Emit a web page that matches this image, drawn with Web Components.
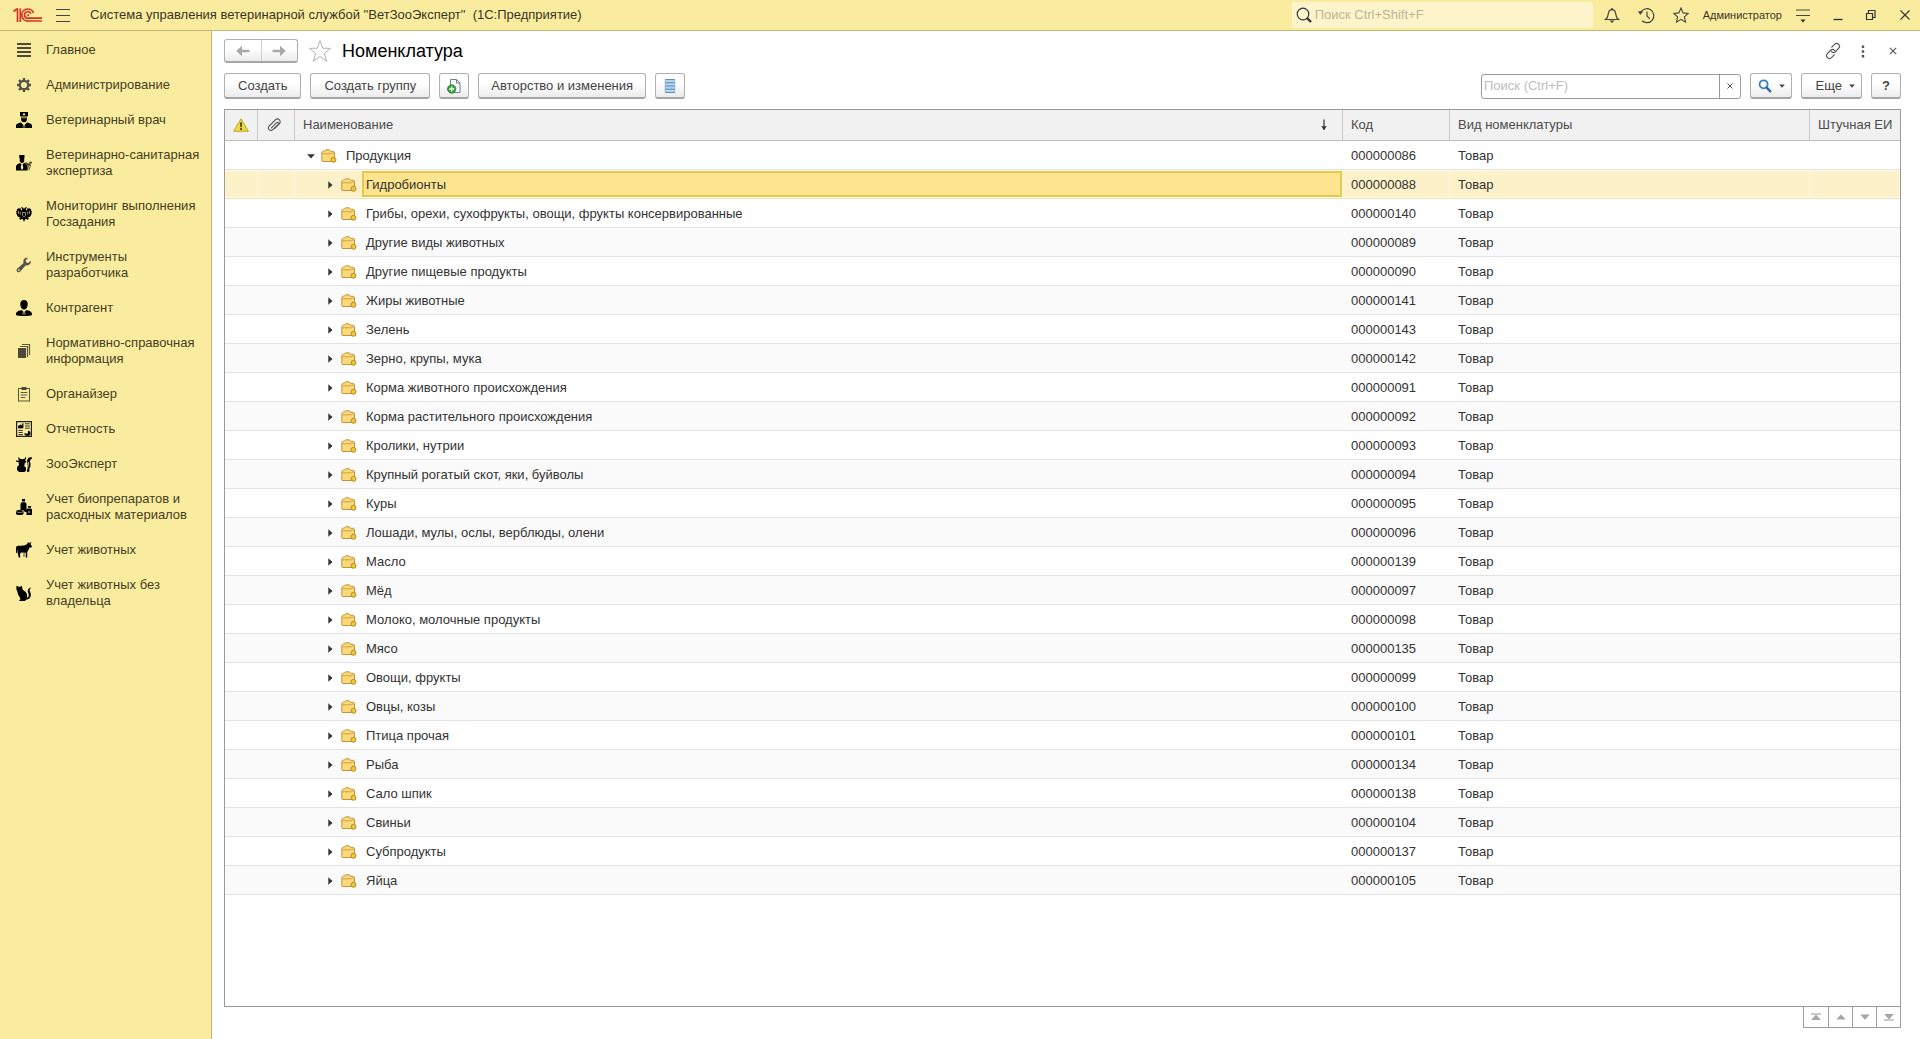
<!DOCTYPE html>
<html lang="ru">
<head>
<meta charset="utf-8">
<title>Номенклатура</title>
<style>
  html, body { margin: 0; height: 100%; }
  body {
    font: 13px/16px "Liberation Sans", Arial, sans-serif;
    color: #333;
    background: #fff;
    --accent: #faec9f;
    --accent-line: #c4b772;
    --frame: #9a9a9a;
  }
</style>
</head>
<body>
<vet-app></vet-app>
<script>
const ICONS = {
  logo: [30, 16, `<g fill="none" stroke="#d8321f" stroke-width="1.700"><path d="M.5 4.500 3.700 2H4.500V15M7.300 15V1.500"/><path d="M20.500 6A6 6 0 1 0 15.500 14H29"/><path d="M18 6.800A3.300 3.300 0 1 0 15.500 11.200H29"/><path d="M15.200 7.200v2"/></g>`],
  menu: [16, 16, `<path d="M1 2.500h14M1 8.500h14M1 14.500h14" stroke="#444" stroke-width="1.200"/>`],
  search: [18, 18, `<circle cx="8" cy="8" r="5.800" fill="none" stroke="#333" stroke-width="1.200"/><path d="m12 12 4 4" stroke="#333" stroke-width="2.400"/>`],
  bell: [16, 16, `<path d="M1.500 12.500c2.500-1.600 2.500-3.500 2.800-6C4.700 4 6 2.600 8 2.600S11.300 4 11.700 6.500c.3 2.500.3 4.400 2.800 6z" fill="none" stroke="#444" stroke-width="1.200"/><path d="M8 1v2" stroke="#444" stroke-width="1.500"/><path d="M5.500 13.500h5L8 16z" fill="#444"/>`],
  history: [17, 17, `<path d="M2.600 5.500A7 7 0 1 1 4 13.800" fill="none" stroke="#444" stroke-width="1.200"/><path d="M0 4.200h5.200L2.200 8z" fill="#444"/><path d="M9 4.500V9l2.800 2.800" fill="none" stroke="#444" stroke-width="1.200"/>`],
  star: [16, 16, `<path d="m8 1 2.100 4.900 5.200.5-3.900 3.500 1.100 5.200L8 12.400l-4.500 2.700 1.100-5.200L.7 6.400l5.200-.5z" fill="none" stroke="#444" stroke-width="1.100"/>`],
  bigstar: [24, 24, `<path d="m12 1.500 2.700 7.700 8 .2-6.400 4.900 2.400 7.900-6.700-4.700-6.700 4.700 2.400-7.900L1.300 9.400l8-.2z" fill="#fff" stroke="#b4b4b4"/>`],
  options: [16, 16, `<path d="M1 3h14M1 8.500h14" stroke="#444" stroke-width="1.200"/><path d="M5.500 12.500h5L8 15.500z" fill="#333"/>`],
  minimize: [10, 12, `<path d="M.5 10.500h9" stroke="#333" stroke-width="1.300"/>`],
  restore: [12, 12, `<path d="M1.500 4.500h6v6h-6zM3.500 4V1.500h6.500v7H8" fill="none" stroke="#333" stroke-width="1.200"/>`],
  close: [12, 12, `<path d="m1.500 1.500 9 9m0-9-9 9" stroke="#333" stroke-width="1.100"/>`],
  smallclose: [8, 8, `<path d="m.8.8 6.400 6.400m0-6.400L.8 7.200" stroke="#555" stroke-width="1.100"/>`],
  tinyclose: [6, 6, `<path d="m.5.500 5 5m0-5-5 5" stroke="#555"/>`],
  dots: [4, 13, `<path d="M.8.500h2.400v2.600H.8zM.8 5.200h2.400v2.600H.8zM.8 9.900h2.400v2.600H.8z" fill="#555"/>`],
  link: [18, 18, `<g fill="none" stroke="#555" stroke-width="1.200" stroke-linecap="round"><path d="m7.800 5.200 2.700-2.800c1.300-1.200 3-1.200 4.100-.1 1.200 1.200 1.200 2.900 0 4.100l-3.300 3.300c-1.200 1.100-2.700 1.100-3.800 0"/><path d="m10.200 12.800-2.700 2.800c-1.300 1.200-3 1.200-4.100.1-1.200-1.200-1.200-2.900 0-4.100l3.300-3.300c1.200-1.100 2.700-1.100 3.800 0"/></g>`],
  left: [16, 12, `<path d="M7 .8 1.200 6 7 11.200V7.300h7.500V4.700H7z" fill="#a9a9a9"/>`],
  right: [16, 12, `<path d="M9 .8 14.800 6 9 11.200V7.300H1.500V4.700H9z" fill="#a9a9a9"/>`],
  copy: [14, 16, `<path d="M3.500 1.500h6l3.500 3.600v9.400H3.500z" fill="#fff" stroke="#6b7e92"/><path d="M9.500 1.500v3.600H13" fill="none" stroke="#6b7e92"/><circle cx="4.700" cy="11" r="4.200" fill="#36a540" stroke="#1f7c2b" stroke-width=".8"/><path d="M4.700 8.600v4.800M2.300 11h4.800" stroke="#fff" stroke-width="1.300"/>`],
  list: [12, 16, `<path d="M1 1.500h10v13H1z" fill="#b3d2ec"/><path d="M1 1.500h10M1 4.700h10M1 8h10M1 11.200h10M1 14.500h10" stroke="#5f8fb8"/><path d="M1.200 1v14M10.800 1v14" stroke="#8fb2d0" stroke-width=".7"/>`],
  find: [14, 14, `<circle cx="5.600" cy="5.300" r="4" fill="none" stroke="#3580b8" stroke-width="1.800"/><path d="m8.500 8.300 3.800 4" stroke="#2f6f9f" stroke-width="2.400" stroke-linecap="round"/>`],
  caret: [6, 4, `<path d="M.2.500h5.600L3 3.800z" fill="#444"/>`],
  warn: [16, 14, `<path d="M8 .8 15.400 13.300H.6z" fill="#ecd93a" stroke="#b9a73c" stroke-linejoin="round"/><path d="M7 4.500h2l-.4 4.800H7.400zM7.100 10.200h1.800V12H7.100z" fill="#3a3a1c"/>`],
  clip: [14, 14, `<path d="m4 10.300 5.600-5.600c.5-.5 1.200-.5 1.600 0 .5.400.5 1.100 0 1.600l-5.300 5.300c-1.100 1.100-2.700 1.100-3.700.1s-1-2.600 0-3.700l5.900-5.900c1.300-1.300 3.200-1.400 4.300-.3s1 3-.3 4.300l-4.800 4.800" fill="none" stroke="#555" stroke-width="1.100"/>`],
  down: [8, 5, `<path d="M.2.300h7.600L4 4.500z" fill="#333"/>`],
  next: [5, 8, `<path d="M.3.200 4.500 4 .3 7.800z" fill="#333"/>`],
  folder: [16, 14, `<path d="M.8 12V3.300L2.500 2h1l1.200-1.200h3.500L9.500 2.300h3l1 1v9.200H1.300z" fill="#fcd978" stroke="#c0943a"/><path d="M1.300 4.800h9l1.200-.8h1.500" fill="none" stroke="#c79b40" stroke-width=".9"/><circle cx="12.500" cy="10.800" r="2.500" fill="#edc73a" stroke="#a98528" stroke-width=".9"/>`],
  sort: [8, 12, `<path d="M4 .5v10" stroke="#333" stroke-width="1.200"/><path d="M1.300 7.300h5.400L4 11.300z" fill="#333"/>`],
  first: [10, 8, `<path d="M0 1h10" stroke="#999"/><path d="m5 1.500 4.800 5.500H.2z" fill="#a5a5a5"/>`],
  prev: [10, 8, `<path d="m5 1.300 4.800 5.200H.2z" fill="#a5a5a5"/>`],
  following: [10, 8, `<path d="M5 6.700.2 1.500h9.600z" fill="#a5a5a5"/>`],
  last: [10, 8, `<path d="M0 7h10" stroke="#999"/><path d="M5 6.500.2 1h9.600z" fill="#a5a5a5"/>`],
  main: [16, 16, `<path d="M1 2h14M1 6h14M1 10h14M1 14h14" stroke="#4d4a3a" stroke-width="2"/>`],
  gear: [16, 16, `<circle cx="8" cy="8" r="4.200" fill="none" stroke="#55524a" stroke-width="2.200"/><path d="M8 1v2.500M8 12.500V15M1 8h2.500M12.500 8H15M3 3l1.800 1.800M11.200 11.200 13 13M13 3l-1.800 1.800M4.800 11.200 3 13" stroke="#55524a" stroke-width="2.400"/>`],
  vet: [16, 16, `<path d="M4 0h8v3.500l-.6 1H4.600L4 3.500z"/><path d="M5 5h6v1.700C11 9 9.700 10.300 8 10.300S5 9 5 6.700z"/><path d="M7.500 1h1v.8h.8v1h-.8v.8h-1v-.8h-.8v-1h.8zM5.200 5.600h5.600v.7H5.200z" fill="#faec9f"/><path d="M0 16v-2.500c.2-1.500 1.200-2 5-3l3 3 3-3c3.800 1 4.800 1.500 5 3V16z"/><path d="m6.300 10.800 1.300 1.500-.6 3.500M9.700 10.800l-1.300 1.500.6 3.500" stroke="#faec9f" stroke-width=".6" fill="none"/>`],
  vse: [16, 16, `<path d="M3.300 0h5.200v2.800l-.3.500v2.300C8.200 7 7.300 8 6 8S3.700 7 3.700 5.600V3.300l-.4-.5z"/><path d="M0 15.600v-4C.3 9.500 1.500 9 4 8l2 2 2-2c2 .6 3 1.200 3 3v4.600z"/><path d="M5.300 9.500h1.400l.6 3.500L6 15l-1.300-2z" fill="#faec9f"/><path d="M8.500 7.500h2.700l.5 1H13l.5-1.700H16v1.400h-1.300L14 10.500h-1l-1.300 4.700h-1.100l.9-4.700H10z" fill="#4a452a"/><path d="M14.800 9.500 14 12l-1.300 3.300" stroke="#4a452a" fill="none" stroke-width=".9"/>`],
  eagle: [16, 16, `<path d="M8 3.500C7.500 1.500 6.300.8 5 1.500l1 1.200v1.600C5.500 5 5 4 4.700 2.800L3.800 1.500 3.300 3 2.500 1.700 2 3.500 1 2.500 1 5 0 4.500l.7 2.800L0 7.200l1.500 2.500-.7.100 2.400 1.500h1.300L2.500 13l1.700-.2-.2 1.500 2-1.500 1 .7 1 2.500 1-2.500 1-.7 2 1.500-.2-1.500 1.700.2-2-1.700h1.300l2.400-1.500-.7-.1L16 7.200l-.7.100.7-2.800-1 .5V2.500l-1 1-.5-1.800-.8 1.300-.5-1.500-.9 1.300C11 4 10.500 5 10 4.300V2.700l1-1.200C9.700.8 8.500 1.500 8 3.500z"/><path d="M6.500 6.500h3v3L8 10.800 6.500 9.500zM4.300 5.500v3M11.700 5.500v3M2.500 5v3M13.500 5v3" fill="none" stroke="#faec9f" stroke-width=".6"/>`],
  wrench: [16, 16, `<path d="M14.800 3.800 12.300 6l-2.200-.5-.4-2.200L12 1C9.800.3 7.400 1.800 7.300 4.200c0 .6.100 1.200.3 1.700L1.400 11.600c-1 1-1 2.300-.2 3.100.9.900 2.300.8 3.100-.2l5.400-6.300c2.900 1 5.700-1.600 5.100-4.400z" fill="#55524a"/><circle cx="2.900" cy="13.100" r=".9" fill="#faec9f"/>`],
  person: [16, 16, `<path d="M4.300 4c0-2.400 1.500-4 3.700-4s3.700 1.600 3.700 4c0 3-1.500 5.500-3.700 5.500S4.300 7 4.300 4z"/><path d="M0 15c0-3 1.300-4 5.500-5L8 12l2.500-2c4.200 1 5.500 2 5.500 5-2 1.300-14 1.300-16 0z"/><path d="m6.500 10.800 1 1-.7 3M9.500 10.800l-1 1 .7 3" stroke="#faec9f" stroke-width=".7" fill="none"/>`],
  books: [16, 16, `<path d="M2 5h8v10H2z" fill="#4b4939"/><path d="M4 3.500h7.500V14M6 1.500h7.500V12" fill="none" stroke="#5d5943" stroke-width="1.200"/>`],
  clipboard: [16, 16, `<path d="M2.500 2.500h11v12.500h-11z" fill="none" stroke="#5d5943" stroke-width="1.100"/><path d="M5.500 1h5v3h-5z" fill="#4b4939"/><path d="M4.700 6.500h6.600M4.700 9h6.600M4.700 11.500h4.500" stroke="#5d5943" stroke-width="1.100"/>`],
  report: [16, 16, `<path d="M.6.600h14.800v14.800H.6z" fill="none" stroke="#222" stroke-width="1.200"/><path d="M2.500 7V5l2-1 1.200.7L7 2.500V7zM9 2.800h4.800M9 5h4.800M9 7.200h4.800M2.500 9.500h4.200M2.500 11.500h4.200M2.500 13.500h4.200" stroke="#222" stroke-width=".9"/><path d="M8 12.500h4V9.700c1.700 0 2.500 1.200 2.500 2.700 0 1.400-1 2.400-3 2.400-1.700 0-3-.6-3.500-2.300z"/>`],
  zoo: [16, 16, `<path d="M0 4.500 3 4.800 2.300 2.800 2.600.8l1.200 2 2.700.5L9 2.500 9.500.5l.7 2L9 4.500l1.500.8-1 1.500-.8.500-.4 3 1.700 1.500v2.700L8.500 16H3l-2-2v-3l2-2-.5-3L.3 6z"/><path d="m11 4.500 1.500-2.700L15.500 1l.5 1.500-1.500 1.200-.7 1.800.7 2-.2 3.500-1 1.200.2 3.300-2 .5-.7-1 .8-2.500z" /><path d="m11.800 5.500 1 1-.5 4.500-1 1z" fill="#faec9f"/>`],
  bottles: [16, 16, `<path d="M6 0h3v2.500H6zM5.500 3.200h4L10.500 5v8H9l-2-2H4.500V5zM12 7h3v1.800h-3zM11.300 9.500h4l.7 1.300V16h-5.500v-5z"/><path d="M0 12c1-1.500 6-1.500 7.500 0V15c-1.500 1.300-6.500 1.300-7.500 0z"/><path d="M.3 12.700c2 1 5 1 7 0" stroke="#faec9f" stroke-width=".6" fill="none"/><path d="M13 12v2m-1-1h2" stroke="#faec9f" stroke-width=".6"/>`],
  cow: [16, 16, `<path d="M.5 4.300C2 3.300 8 4.300 10.500 2.500l1.300-1.300L11.500 0l1.800 1L15.500 0 14.500 2l1.500 2.500-1 1.300-1.500-.3-1.300 3-1 1.500V15.500H9.800V10.800L5 10.500l-1 1.500.3 3.500H2.800L1.500 10.500 1.300 6.500.8 11H0V6z"/><path d="M8.500 10v5h-1v-4.500z" fill="#4a452a"/>`],
  cat: [16, 16, `<path d="m.5.800 2.200 1h1.500L5.800.8 6.500 4c0 1.300 3 2 4 4.300.7 1.500.7 3.200.5 4.700 1.500-.8 2-2 1.700-3.500-.3-1.700-1.300-2.700-.8-4.500C12.500 3.200 14 2 15.700 3c-.8 0-1.900.5-2.100 2-.2 1.400 1.400 2.600 1.300 5-.1 2.600-2 4.500-4.900 4.800L9 16H3.500l-.3-1 1.500-.8-2-3.700C1.500 9.500 2 7.200.8 5.500L.3 3.500z"/>`]
};

/* Base class: clones markup and styles into an open shadow root. */
class Part extends HTMLElement {
  connectedCallback() {
    if (this.shadowRoot) return;
    const tpl = document.createElement('template');
    tpl.innerHTML = `<style>*{box-sizing:border-box}button{font:inherit;color:inherit;border:0;padding:0;margin:0;background:none}${this.css()}</style>${this.html()}`;
    this.attachShadow({ mode: 'open' }).append(tpl.content.cloneNode(true));
  }
  css() { return ''; }
  html() { return '<slot></slot>'; }
}

customElements.define('vet-icon', class extends Part {
  css() { return ':host{display:inline-flex;flex:none;vertical-align:middle}svg{display:block}'; }
  html() {
    const [w, h, body] = ICONS[this.getAttribute('name')];
    return `<svg width="${w}" height="${h}" viewBox="0 0 ${w} ${h}" aria-hidden="true">${body}</svg>`;
  }
});

customElements.define('vet-button', class extends Part {
  css() { return `
    :host{display:inline-flex}
    button{height:26px;min-width:30px;padding:1px var(--pad,6px) 0;display:flex;align-items:center;justify-content:var(--justify,center);gap:7px;
      border:1px solid #b0b0b0;border-bottom:2px solid #a4a4a4;border-radius:3px;background:linear-gradient(#fff 40%,#ececec);color:#444;white-space:nowrap;width:100%}`; }
  html() {
    const label = this.getAttribute('label');
    return `<button type="button"${label ? ` aria-label="${label}"` : ''}><slot></slot></button>`;
  }
});

customElements.define('vet-titlebar', class extends Part {
  css() { return `
    :host{display:flex;align-items:center;height:31px;background:var(--accent);border-bottom:1px solid var(--accent-line);padding:0 9px 0 13px;color:#3a3624}
    .menu{margin:0 19px 0 12px}
    .name{flex:1;white-space:pre}
    label{display:flex;align-items:center;gap:2px;width:301px;height:26px;padding-left:3px;background:#fdf4cb;border-radius:3px}
    input{flex:1;min-width:0;border:0;background:none;outline:0;font:inherit;padding:0}
    input::placeholder{color:#bcb694;opacity:1}
    .tools{display:flex;align-items:center;gap:18px;margin:0 14px 0 11px}
    .user{font-size:11px;white-space:nowrap}
    .win{display:flex;align-items:center;gap:22px;margin-left:13px}
    button{display:flex}`; }
  html() { return `
    <vet-icon name="logo"></vet-icon>
    <button class="menu" type="button" aria-label="Меню"><vet-icon name="menu"></vet-icon></button>
    <span class="name">Система управления ветеринарной службой "ВетЗооЭксперт"  (1С:Предприятие)</span>
    <label><vet-icon name="search"></vet-icon><input type="text" placeholder="Поиск Ctrl+Shift+F" aria-label="Поиск"></label>
    <div class="tools">
      <button type="button" aria-label="Уведомления"><vet-icon name="bell"></vet-icon></button>
      <button type="button" aria-label="История"><vet-icon name="history"></vet-icon></button>
      <button type="button" aria-label="Избранное"><vet-icon name="star"></vet-icon></button>
    </div>
    <button class="user" type="button">Администратор</button>
    <div class="win">
      <button type="button" aria-label="Настройки"><vet-icon name="options"></vet-icon></button>
      <button type="button" aria-label="Свернуть"><vet-icon name="minimize"></vet-icon></button>
      <button type="button" aria-label="Восстановить"><vet-icon name="restore"></vet-icon></button>
      <button type="button" aria-label="Закрыть"><vet-icon name="close"></vet-icon></button>
    </div>`; }
});

const SECTIONS = [
  ['main', 'Главное'], ['gear', 'Администрирование'], ['vet', 'Ветеринарный врач'],
  ['vse', 'Ветеринарно-санитарная экспертиза'], ['eagle', 'Мониторинг выполнения Госзадания'],
  ['wrench', 'Инструменты разработчика'], ['person', 'Контрагент'],
  ['books', 'Нормативно-справочная информация'], ['clipboard', 'Органайзер'], ['report', 'Отчетность'],
  ['zoo', 'ЗооЭксперт'], ['bottles', 'Учет биопрепаратов и расходных материалов'],
  ['cow', 'Учет животных'], ['cat', 'Учет животных без владельца']
];

customElements.define('vet-sidebar', class extends Part {
  css() { return `
    :host{display:block;width:212px;flex:none;background:var(--accent);border-right:1px solid var(--accent-line)}
    nav{display:flex;flex-direction:column;gap:19px;padding:11px 10px 0 16px}
    a{display:flex;align-items:center;gap:14px;color:#45401f;text-decoration:none}`; }
  html() { return `<nav aria-label="Разделы">${SECTIONS.map(([i, t]) => `<a href="#${i}"><vet-icon name="${i}"></vet-icon><span>${t}</span></a>`).join('')}</nav>`; }
});

customElements.define('vet-heading', class extends Part {
  css() { return `
    :host{display:flex;align-items:center;height:24px}
    .nav{display:flex;width:74px;height:24px;border:1px solid #b0b0b0;border-bottom:2px solid #a6a6a6;border-radius:3px;background:linear-gradient(#fff 40%,#ececec)}
    .nav button{flex:1;display:flex;align-items:center;justify-content:center}
    .nav button+button{border-left:1px solid #d0d0d0}
    .fav{display:flex;margin:0 10px}
    h1{flex:1;margin:0;font-size:18px;line-height:24px;font-weight:400;color:#000}
    .win{display:flex;align-items:center;gap:14px}
    .win button{display:flex;justify-content:center;width:16px}`; }
  html() { return `
    <div class="nav"><button type="button" aria-label="Назад"><vet-icon name="left"></vet-icon></button><button type="button" aria-label="Вперед"><vet-icon name="right"></vet-icon></button></div>
    <button class="fav" type="button" aria-label="В избранное"><vet-icon name="bigstar"></vet-icon></button>
    <h1><slot></slot></h1>
    <div class="win">
      <button type="button" aria-label="Ссылка"><vet-icon name="link"></vet-icon></button>
      <button type="button" aria-label="Действия"><vet-icon name="dots"></vet-icon></button>
      <button type="button" aria-label="Закрыть"><vet-icon name="smallclose"></vet-icon></button>
    </div>`; }
});

customElements.define('vet-toolbar', class extends Part {
  css() { return `
    :host{display:flex;align-items:center;gap:9px;margin:10px 0}
    .text{--pad:13px}
    .long{--pad:12px}
    .field{display:flex;width:260px;height:25px;margin-left:auto;border:1px solid var(--frame);border-radius:3px;background:#fff}
    input{flex:1;min-width:0;border:0;outline:0;background:none;padding:0 2px;font:inherit}
    input::placeholder{color:#bdbdbd;opacity:1}
    .field button{width:21px;border-left:1px solid var(--frame);display:flex;align-items:center;justify-content:center}
    .find{width:42px}
    .more{width:61px;--justify:flex-end}
    .help{width:30px;font-weight:700}`; }
  html() { return `
    <vet-button class="text">Создать</vet-button>
    <vet-button class="text">Создать группу</vet-button>
    <vet-button label="Скопировать"><vet-icon name="copy"></vet-icon></vet-button>
    <vet-button class="long">Авторство и изменения</vet-button>
    <vet-button label="Список"><vet-icon name="list"></vet-icon></vet-button>
    <div class="field"><input type="text" placeholder="Поиск (Ctrl+F)" aria-label="Поиск"><button type="button" aria-label="Очистить"><vet-icon name="tinyclose"></vet-icon></button></div>
    <vet-button class="find" label="Найти"><vet-icon name="find"></vet-icon><vet-icon name="caret"></vet-icon></vet-button>
    <vet-button class="more">Еще<vet-icon name="caret"></vet-icon></vet-button>
    <vet-button class="help">?</vet-button>`; }
});

const ROWS = [
  ['Продукция', '086'], ['Гидробионты', '088'], ['Грибы, орехи, сухофрукты, овощи, фрукты консервированные', '140'],
  ['Другие виды животных', '089'], ['Другие пищевые продукты', '090'], ['Жиры животные', '141'], ['Зелень', '143'],
  ['Зерно, крупы, мука', '142'], ['Корма животного происхождения', '091'], ['Корма растительного происхождения', '092'],
  ['Кролики, нутрии', '093'], ['Крупный рогатый скот, яки, буйволы', '094'], ['Куры', '095'],
  ['Лошади, мулы, ослы, верблюды, олени', '096'], ['Масло', '139'], ['Мёд', '097'], ['Молоко, молочные продукты', '098'],
  ['Мясо', '135'], ['Овощи, фрукты', '099'], ['Овцы, козы', '100'], ['Птица прочая', '101'], ['Рыба', '134'],
  ['Сало шпик', '138'], ['Свиньи', '104'], ['Субпродукты', '137'], ['Яйца', '105']
];

customElements.define('vet-grid', class extends Part {
  css() { return `
    :host{display:block;flex:1;min-height:0;overflow:hidden;border:1px solid var(--frame);background:#fff}
    table{width:100%;border-collapse:separate;border-spacing:0;table-layout:fixed}
    .flag{width:33px}.clip{width:37px}.code{width:107px}.kind{width:360px}.unit{width:90px}
    th,td{padding:0 0 0 8px;text-align:left;font-weight:400;white-space:nowrap;overflow:hidden}
    th{height:31px;background:#f1f1f1;border-bottom:1px solid #bdbdbd;border-right:1px solid #c9c9c9;color:#4c4c4c}
    th:nth-child(-n+2){padding:0;text-align:center;line-height:0}
    th:nth-child(2){padding-right:4px}
    th:last-child,td:last-child{border-right:0}
    th div{display:flex;justify-content:space-between;align-items:center;padding-right:14px}
    td{height:29px;padding-top:2px;border-bottom:1px solid #e3e3e3}
    tr:nth-child(even) td{background:#fafafa}
    td.name{padding-top:0}
    .item{display:flex;align-items:center;height:28px;padding:2px 0 0 21px}
    .top .item{padding-left:2px}
    .item>span{flex:1;align-self:stretch;display:flex;align-items:center;margin-left:5px;padding-left:4px}
    .twist{width:12px;display:flex;justify-content:center;margin-right:5px}
    .top .twist{margin-right:4px}
    tr.sel td{background:#fcf1c8;border-right:1px solid #fff8e2;border-bottom-color:#efe3b8;box-shadow:inset 0 1px #fffaf0,inset 0 -1px #fffaf0}
    .sel .item>span{margin-top:-1px;margin-bottom:1px;padding:2px 0 0 2px;border:2px solid #e8c84b;background:#fde48f}`; }
  html() { return `
    <table>
      <colgroup><col class="flag"><col class="clip"><col><col class="code"><col class="kind"><col class="unit"></colgroup>
      <thead><tr><th aria-label="Внимание"><vet-icon name="warn"></vet-icon></th><th aria-label="Файлы"><vet-icon name="clip"></vet-icon></th>
        <th><div>Наименование<vet-icon name="sort"></vet-icon></div></th><th>Код</th><th>Вид номенклатуры</th><th>Штучная ЕИ</th></tr></thead>
      <tbody>${ROWS.map(([n, c], i) => `<tr class="${i === 0 ? 'top' : i === 1 ? 'sel' : ''}"><td></td><td></td>
        <td class="name"><div class="item"><div class="twist"><vet-icon name="${i ? 'next' : 'down'}"></vet-icon></div><vet-icon name="folder"></vet-icon><span>${n}</span></div></td>
        <td>000000${c}</td><td>Товар</td><td></td></tr>`).join('')}</tbody>
    </table>`; }
});

customElements.define('vet-pager', class extends Part {
  css() { return `
    :host{display:flex;align-self:flex-end;border:1px solid var(--frame);border-top:0}
    button{width:24px;height:20px;display:flex;align-items:center;justify-content:center}
    button:first-child{width:23px}
    button+button{border-left:1px solid var(--frame)}`; }
  html() { return [['first', 'В начало'], ['prev', 'Вверх'], ['following', 'Вниз'], ['last', 'В конец']]
    .map(([i, t]) => `<button type="button" aria-label="${t}"><vet-icon name="${i}"></vet-icon></button>`).join(''); }
});

customElements.define('vet-app', class extends Part {
  css() { return `
    :host{display:flex;flex-direction:column;height:100vh;overflow:hidden}
    .body{flex:1;min-height:0;display:flex}
    main{flex:1;min-width:0;display:flex;flex-direction:column;padding:8px 19px 11px 12px}`; }
  html() { return `
    <vet-titlebar></vet-titlebar>
    <div class="body">
      <vet-sidebar></vet-sidebar>
      <main>
        <vet-heading>Номенклатура</vet-heading>
        <vet-toolbar></vet-toolbar>
        <vet-grid></vet-grid>
        <vet-pager></vet-pager>
      </main>
    </div>`; }
});
</script>
</body>
</html>
